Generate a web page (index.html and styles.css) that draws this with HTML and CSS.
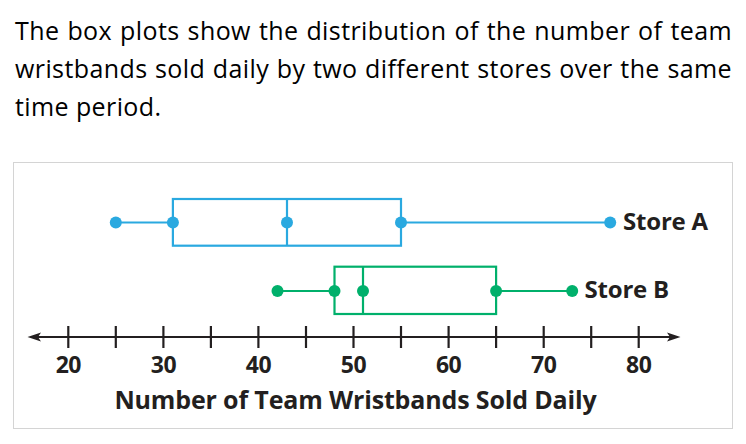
FILE: index.html
```html
<!DOCTYPE html>
<html lang="en">
<head>
<meta charset="utf-8">
<title>Box plots</title>
<link rel="stylesheet" href="styles.css">
</head>
<body>
<p class="prompt">The box plots show the distribution of the number of team wristbands sold daily by two different stores over the same time period.</p>
<div class="chart">
  <svg class="plot" width="718" height="265" viewBox="0 0 718 265" xmlns="http://www.w3.org/2000/svg">
    <!-- Store A -->
    <g class="store-a">
      <line x1="101.8" y1="59.5" x2="158.9" y2="59.5"/>
      <line x1="387" y1="59.5" x2="596.2" y2="59.5"/>
      <rect x="158.9" y="36" width="228.1" height="46.7"/>
      <line x1="273" y1="36" x2="273" y2="82.7"/>
      <circle cx="101.8" cy="59.5" r="6"/>
      <circle cx="158.9" cy="59.5" r="6"/>
      <circle cx="273" cy="59.5" r="6"/>
      <circle cx="387" cy="59.5" r="6"/>
      <circle cx="596.2" cy="59.5" r="6"/>
    </g>
    <text class="label" x="609" y="67">Store A</text>
    <!-- Store B -->
    <g class="store-b">
      <line x1="263.5" y1="128" x2="320.5" y2="128"/>
      <line x1="482.1" y1="128" x2="558.2" y2="128"/>
      <rect x="320.5" y="103.7" width="161.6" height="47.3"/>
      <line x1="349" y1="103.7" x2="349" y2="151"/>
      <circle cx="263.5" cy="128" r="6"/>
      <circle cx="320.5" cy="128" r="6"/>
      <circle cx="349" cy="128" r="6"/>
      <circle cx="482.1" cy="128" r="6"/>
      <circle cx="558.2" cy="128" r="6"/>
    </g>
    <text class="label" x="570.5" y="135">Store B</text>
    <!-- Axis -->
    <g class="axis">
      <line x1="20" y1="174" x2="660" y2="174"/>
      <path class="arrow" d="M13.5 174 L27 169.5 L24 174 L27 178.5 Z"/>
      <path class="arrow" d="M666.5 174 L653 169.5 L656 174 L653 178.5 Z"/>
      <line x1="54.3" y1="163" x2="54.3" y2="185"/>
      <line x1="101.8" y1="163" x2="101.8" y2="185"/>
      <line x1="149.4" y1="163" x2="149.4" y2="185"/>
      <line x1="196.9" y1="163" x2="196.9" y2="185"/>
      <line x1="244.4" y1="163" x2="244.4" y2="185"/>
      <line x1="292" y1="163" x2="292" y2="185"/>
      <line x1="339.5" y1="163" x2="339.5" y2="185"/>
      <line x1="387" y1="163" x2="387" y2="185"/>
      <line x1="434.6" y1="163" x2="434.6" y2="185"/>
      <line x1="482.1" y1="163" x2="482.1" y2="185"/>
      <line x1="529.7" y1="163" x2="529.7" y2="185"/>
      <line x1="577.2" y1="163" x2="577.2" y2="185"/>
      <line x1="624.7" y1="163" x2="624.7" y2="185"/>
    </g>
    <g class="ticks">
      <text x="54.3" y="210">20</text>
      <text x="149.4" y="210">30</text>
      <text x="244.4" y="210">40</text>
      <text x="339.5" y="210">50</text>
      <text x="434.6" y="210">60</text>
      <text x="529.7" y="210">70</text>
      <text x="624.7" y="210">80</text>
    </g>
    <text class="title" x="341.5" y="246">Number of Team Wristbands Sold Daily</text>
  </svg>
</div>
</body>
</html>
```
FILE: styles.css
```css
html, body {
  margin: 0;
  padding: 0;
  background: #ffffff;
}
body {
  padding: 0 14px 0 15px;
}
.prompt {
  margin: 11px 0 0 0;
  font-family: "Open Sans", "DejaVu Sans", sans-serif;
  font-size: 25px;
  letter-spacing: 0.4px;
  line-height: 38px;
  color: #000000;
  text-align: justify;
  text-align-last: left;
}
.chart {
  margin: 37px 0 0 -2px;
  width: 718px;
  height: 265px;
  border: 1px solid #d4d4d4;
}
.plot {
  display: block;
}
.store-a line, .store-a rect {
  stroke: #2aa9e0;
  stroke-width: 2.2;
  fill: none;
}
.store-a circle {
  fill: #2aa9e0;
}
.store-b line, .store-b rect {
  stroke: #00b06b;
  stroke-width: 2.2;
  fill: none;
}
.store-b circle {
  fill: #00b06b;
}
.axis line {
  stroke: #231f20;
  stroke-width: 2.2;
}
.axis .arrow {
  fill: #231f20;
}
.label, .ticks text, .title {
  font-family: "Open Sans", "Liberation Sans", sans-serif;
  font-weight: 700;
  fill: #231f20;
}
.label {
  font-size: 24px;
  letter-spacing: -0.2px;
}
.ticks text {
  font-size: 23px;
  text-anchor: middle;
  letter-spacing: -0.5px;
}
.title {
  font-size: 25px;
  text-anchor: middle;
  letter-spacing: -0.15px;
}
```
